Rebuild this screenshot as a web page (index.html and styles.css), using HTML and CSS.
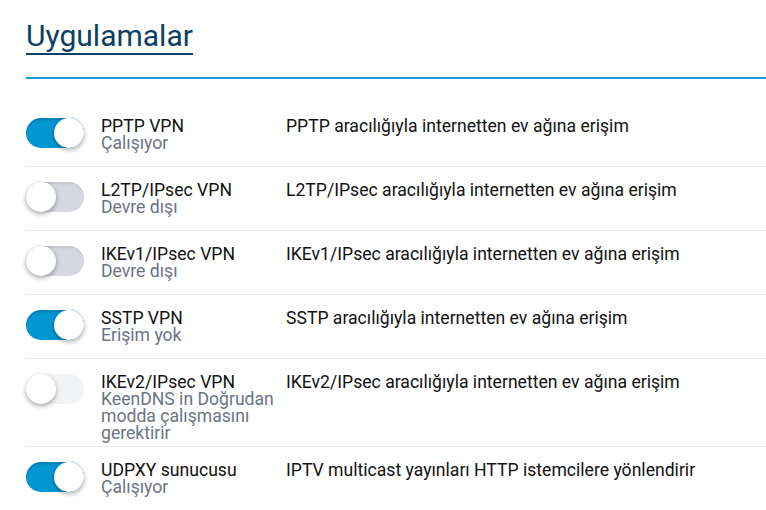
FILE: index.html
```html
<!DOCTYPE html>
<html lang="tr">
<head>
<meta charset="utf-8">
<title>Uygulamalar</title>
<link rel="stylesheet" href="styles.css">
</head>
<body>
  <div class="page">
    <div class="header">
      <h1 class="title">Uygulamalar</h1>
    </div>
    <ul class="apps">
      <li class="app">
        <span class="toggle on"><span class="knob"></span></span>
        <div class="name">
          <div class="label">PPTP VPN</div>
          <div class="status">Çalışıyor</div>
        </div>
        <div class="desc">PPTP aracılığıyla internetten ev ağına erişim</div>
      </li>
      <li class="app">
        <span class="toggle"><span class="knob"></span></span>
        <div class="name">
          <div class="label">L2TP/IPsec VPN</div>
          <div class="status">Devre dışı</div>
        </div>
        <div class="desc">L2TP/IPsec aracılığıyla internetten ev ağına erişim</div>
      </li>
      <li class="app">
        <span class="toggle"><span class="knob"></span></span>
        <div class="name">
          <div class="label">IKEv1/IPsec VPN</div>
          <div class="status">Devre dışı</div>
        </div>
        <div class="desc">IKEv1/IPsec aracılığıyla internetten ev ağına erişim</div>
      </li>
      <li class="app">
        <span class="toggle on"><span class="knob"></span></span>
        <div class="name">
          <div class="label">SSTP VPN</div>
          <div class="status">Erişim yok</div>
        </div>
        <div class="desc">SSTP aracılığıyla internetten ev ağına erişim</div>
      </li>
      <li class="app">
        <span class="toggle disabled"><span class="knob"></span></span>
        <div class="name">
          <div class="label">IKEv2/IPsec VPN</div>
          <div class="status">KeenDNS in Doğrudan modda çalışmasını gerektirir</div>
        </div>
        <div class="desc">IKEv2/IPsec aracılığıyla internetten ev ağına erişim</div>
      </li>
      <li class="app">
        <span class="toggle on"><span class="knob"></span></span>
        <div class="name">
          <div class="label">UDPXY sunucusu</div>
          <div class="status">Çalışıyor</div>
        </div>
        <div class="desc">IPTV multicast yayınları HTTP istemcilere yönlendirir</div>
      </li>
    </ul>
  </div>
</body>
</html>
```
FILE: styles.css
```css
body { margin: 0; background: #fff; font-family: Roboto, "Liberation Sans", sans-serif; color: #111; }
.page { padding-left: 26px; }

.header { padding-top: 19px; border-bottom: 2px solid #0a9fd9; padding-bottom: 22px; }
.title { display: inline-block; margin: 0; font-size: 30px; font-weight: 400; line-height: 34px; color: #0b3f63; border-bottom: 2px solid #0b3f63; }

.apps { list-style: none; margin: 24px 0 0; padding: 0; }
.app { display: flex; align-items: flex-start; min-height: 64px; box-sizing: border-box; padding: 14px 0 4px; border-bottom: 1px solid #e8e9eb; font-size: 17.6px; line-height: 17px; }
.app:last-child { border-bottom: none; }

.toggle { position: relative; flex: none; width: 58px; height: 30px; margin-top: 1px; border-radius: 15px; background: #d5d8de; margin-right: 17px; box-shadow: inset 0 2px 2px rgba(0,0,0,.08); }
.toggle.on { background: #0096d1; box-shadow: inset 0 2px 2px rgba(0,0,0,.15); }
.toggle.disabled { background: #f2f3f5; box-shadow: none; }
.knob { position: absolute; top: 0; left: 0; width: 30px; height: 30px; border-radius: 50%; background: #fff; box-shadow: 0 2px 5px rgba(0,0,0,.35); }
.toggle.on .knob { left: 28px; }

.name { flex: none; width: 178px; margin-right: 7px; padding-top: 1px; }
.label { color: #111; }
.status { color: #6b7385; }
.desc { flex: 1; padding-top: 1px; color: #111; }
```
